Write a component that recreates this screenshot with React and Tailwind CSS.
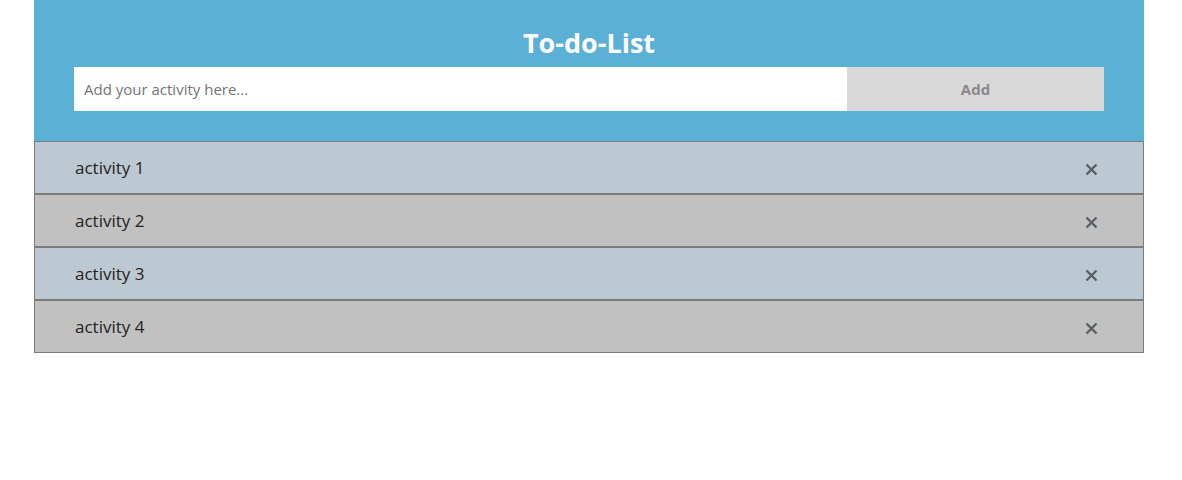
export default function App() {
  const items = ['activity 1', 'activity 2', 'activity 3', 'activity 4']

  return (
    <div className="min-h-[480px] bg-white pl-[34px]" style={{ fontFamily: '"Open Sans", "Noto Sans", sans-serif' }}>
      <div className="w-[1110px]">
        {/* Header */}
        <div className="bg-[#5bb0d5] px-[40px] pt-[23px] pb-[30px]">
          <h1 className="text-center text-[27px] leading-[39px] font-bold text-white">To-do-List</h1>
          <div className="mt-[5px] flex h-[44px]">
            <input
              className="flex-1 bg-white px-[10px] text-[15px] text-gray-700 placeholder-[#757575] outline-none"
              placeholder="Add your activity here..."
            />
            <button className="w-[257px] bg-[#d9d9d9] text-[15px] font-bold text-[#8a8a8a]">Add</button>
          </div>
        </div>

        {/* List */}
        <ul>
          {items.map((item, i) => (
            <li
              key={item}
              className={`flex h-[53px] items-center justify-between border border-[#7c7c7c] pl-[40px] pr-[45px] ${i % 2 === 0 ? 'bg-[#bdc9d2]' : 'bg-[#c1c1c1]'}`}
            >
              <span className="text-[17px] text-[#222]">{item}</span>
              <svg className="mt-[3px]" width="13" height="13" viewBox="0 0 13 13">
                <path d="M1.5 1.5 L11.5 11.5 M11.5 1.5 L1.5 11.5" stroke="#5b5f65" strokeWidth="2.4" strokeLinecap="butt" />
              </svg>
            </li>
          ))}
        </ul>
      </div>
    </div>
  )
}
